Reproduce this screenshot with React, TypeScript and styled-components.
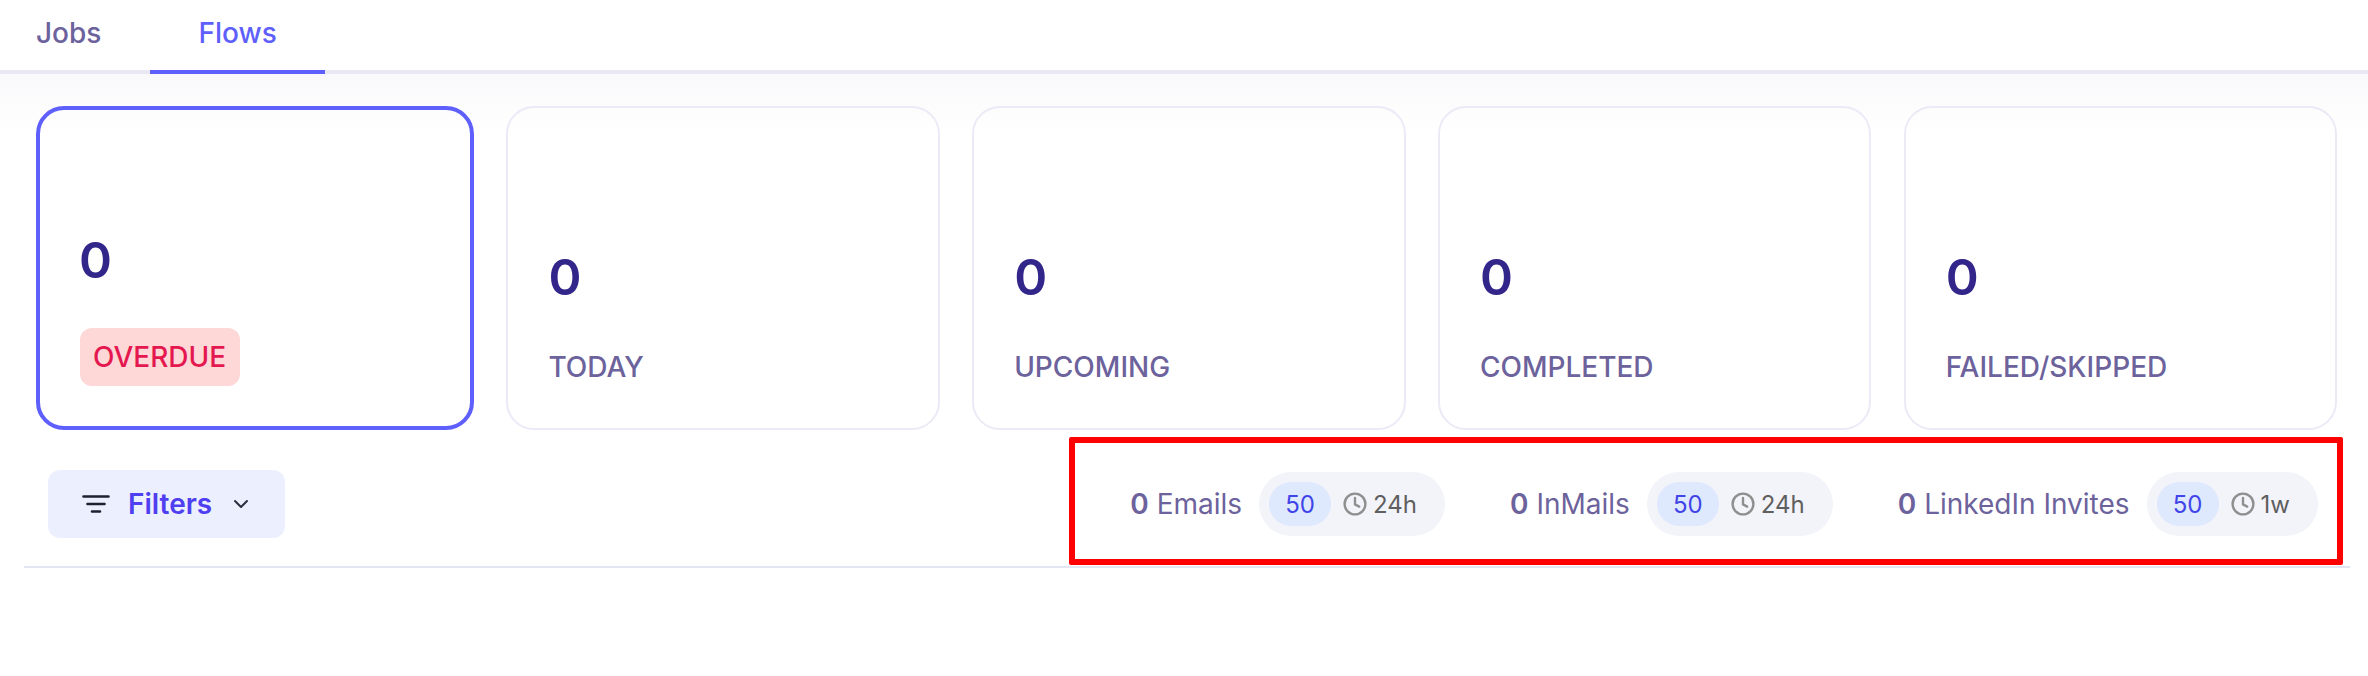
import React from "react";
import styled, { createGlobalStyle } from "styled-components";

const GlobalStyle = createGlobalStyle`
  html, body {
    margin: 0;
    padding: 0;
    background: #fff;
    font-family: Inter, "Liberation Sans", sans-serif;
  }
`;

const Page = styled.div`
  position: relative;
  width: 2368px;
  height: 676px;
  overflow: hidden;
  background: #fff;
`;

const TabBar = styled.nav`
  display: flex;
  height: 70px;
  padding-left: 36px;
  border-bottom: 4px solid #e9e9f4;
`;

const Tab = styled.div<{ $active?: boolean }>`
  display: flex;
  align-items: center;
  height: 70px;
  padding: 0 ${({ $active }) => ($active ? "48px" : "49px")} 4px ${({ $active }) => ($active ? "48px" : "0")};
  box-sizing: border-box;
  font-size: 28px;
  font-weight: 500;
  color: ${({ $active }) => ($active ? "#5f5ffb" : "#6c629c")};
  box-shadow: ${({ $active }) => ($active ? "0 4px 0 #5f5ffb" : "none")};
`;

const CardSection = styled.section`
  display: flex;
  gap: 32.4px;
  padding: 32px 31px 0 36px;
  background: linear-gradient(180deg, #f9f9fb 0, #ffffff 58px);
`;

const Card = styled.div<{ $active?: boolean }>`
  box-sizing: border-box;
  flex: ${({ $active }) => ($active ? "0 0 438px" : "1 1 0")};
  height: 324px;
  display: flex;
  flex-direction: column;
  justify-content: flex-end;
  padding: 0 40px ${({ $active }) => ($active ? "40px" : "45px")};
  border: ${({ $active }) => ($active ? "4px solid #5f5ffb" : "2px solid #eceaf6")};
  border-radius: 28px;
`;

const Value = styled.div<{ $active?: boolean }>`
  font-size: 50px;
  line-height: 58px;
  font-weight: 600;
  color: #32268a;
  margin-left: ${({ $active }) => ($active ? "-1px" : "0")};
  margin-bottom: ${({ $active }) => ($active ? "39px" : "45px")};
`;

const Label = styled.div`
  font-size: 28px;
  line-height: 32px;
  font-weight: 500;
  color: #6c629c;
`;

const Badge = styled.div`
  align-self: flex-start;
  box-sizing: border-box;
  height: 58px;
  display: flex;
  align-items: center;
  padding: 0 14px 0 13px;
  border-radius: 12px;
  background: #fed7d7;
  color: #e5174f;
  font-size: 28px;
  font-weight: 500;
`;

const Toolbar = styled.div`
  display: flex;
  align-items: center;
  justify-content: space-between;
  box-sizing: border-box;
  height: 138px;
  margin: 0 18px 0 24px;
  padding: 12px 32px 0 24px;
  border-bottom: 2px solid #e3e6f2;
`;

const FilterButton = styled.div`
  box-sizing: border-box;
  width: 237px;
  height: 68px;
  display: flex;
  align-items: center;
  padding-left: 34px;
  border-radius: 12px;
  background: #eceffd;
  color: #4f3ff0;
  font-size: 28px;
  font-weight: 600;
`;

const FilterText = styled.span`
  margin: 0 21px 0 18px;
`;

const Limits = styled.div`
  display: flex;
  align-items: center;
`;

const LimitItem = styled.div`
  display: flex;
  align-items: center;
  margin-left: 65px;
`;

const Count = styled.span`
  font-size: 28px;
  color: #6c629c;
`;

const CountNumber = styled.b`
  font-weight: 600;
`;

const Pill = styled.div`
  box-sizing: border-box;
  height: 64px;
  display: flex;
  align-items: center;
  margin-left: 17px;
  padding: 0 28px 0 10px;
  border-radius: 32px;
  background: #f3f4fa;
`;

const Quota = styled.span`
  box-sizing: border-box;
  width: 62px;
  height: 44px;
  display: flex;
  align-items: center;
  justify-content: center;
  border-radius: 22px;
  background: #dfe9fe;
  color: #4145e8;
  font-size: 24px;
`;

const Period = styled.span`
  display: flex;
  align-items: center;
  gap: 6px;
  margin-left: 12px;
  color: #5f5f5f;
  font-size: 24px;
`;

const Annotation = styled.div`
  position: absolute;
  left: 1069px;
  top: 437px;
  width: 1274px;
  height: 128px;
  box-sizing: border-box;
  border: 6px solid #ff0000;
  border-radius: 2px;
  pointer-events: none;
`;

const FilterIcon = () => (
  <svg width="28" height="24" viewBox="0 0 28 24" fill="none" stroke="#1d2130" strokeWidth="2.6" strokeLinecap="round">
    <path d="M1.5 4.5h25M5.5 12h17M10 19.5h8" />
  </svg>
);

const Chevron = () => (
  <svg width="16" height="10" viewBox="0 0 16 10" fill="none" stroke="#2b2f3a" strokeWidth="2" strokeLinecap="round" strokeLinejoin="round">
    <path d="M2 2l6 6 6-6" />
  </svg>
);

const ClockIcon = () => (
  <svg width="24" height="24" viewBox="0 0 24 24" fill="none" stroke="#8f8f8f" strokeWidth="2.4" strokeLinecap="round" strokeLinejoin="round">
    <circle cx="12" cy="12" r="10.4" />
    <path d="M12 6v6.4l4.2 2.2" />
  </svg>
);

const cards = [
  { label: "OVERDUE", active: true },
  { label: "TODAY" },
  { label: "UPCOMING" },
  { label: "COMPLETED" },
  { label: "FAILED/SKIPPED" },
];

const limits = [
  { name: "Emails", period: "24h" },
  { name: "InMails", period: "24h" },
  { name: "LinkedIn Invites", period: "1w" },
];

export default function App() {
  return (
    <Page>
      <GlobalStyle />
      <TabBar>
        <Tab>Jobs</Tab>
        <Tab $active>Flows</Tab>
      </TabBar>
      <CardSection>
        {cards.map((card) => (
          <Card key={card.label} $active={card.active}>
            <Value $active={card.active}>0</Value>
            {card.active ? <Badge>{card.label}</Badge> : <Label>{card.label}</Label>}
          </Card>
        ))}
      </CardSection>
      <Toolbar>
        <FilterButton>
          <FilterIcon />
          <FilterText>Filters</FilterText>
          <Chevron />
        </FilterButton>
        <Limits>
          {limits.map((limit) => (
            <LimitItem key={limit.name}>
              <Count>
                <CountNumber>0</CountNumber> {limit.name}
              </Count>
              <Pill>
                <Quota>50</Quota>
                <Period>
                  <ClockIcon />
                  {limit.period}
                </Period>
              </Pill>
            </LimitItem>
          ))}
        </Limits>
      </Toolbar>
      <Annotation />
    </Page>
  );
}
